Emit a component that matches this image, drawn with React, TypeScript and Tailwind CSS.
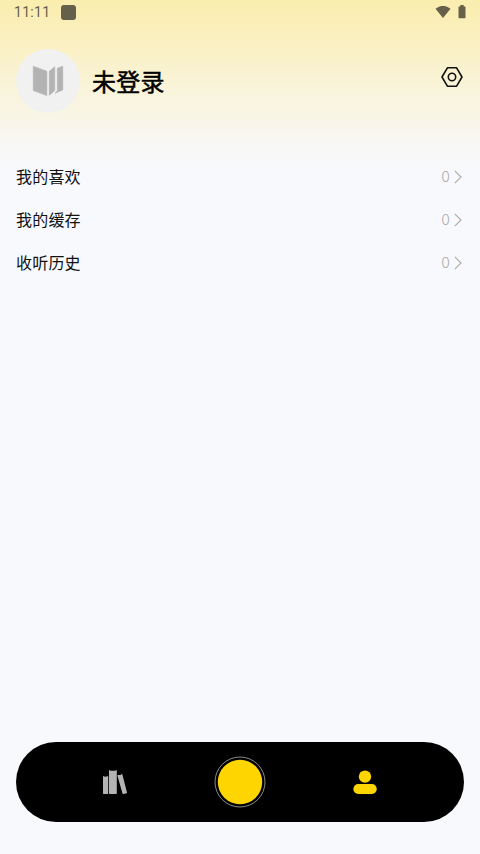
const MENU_ITEMS = [
  { label: "我的喜欢", count: 0 },
  { label: "我的缓存", count: 0 },
  { label: "收听历史", count: 0 },
]

function StatusBar() {
  return (
    <div className="flex h-6 items-center justify-between pl-3.5 pr-3.5 text-[#665f49]">
      <div className="flex items-center">
        <span className="w-[46.5px] font-[Roboto,sans-serif] text-sm leading-6 tracking-[0.3px] text-[#665f49]">11:11</span>
        <span className="h-[15px] w-[15px] rounded-[3px] bg-[#665f49]" />
      </div>
      <div className="flex items-center gap-[7px]">
        <svg className="h-3 w-4" viewBox="0 0 16 12" fill="currentColor">
          <path d="M0.5 2.7Q8-3 15.5 2.7L8 12Z" />
        </svg>
        <svg className="h-[14px] w-2" viewBox="0 0 8 14" fill="currentColor">
          <path d="M2.3 0h3.4v1.4H7q0.5 0 0.5 0.6V12.6q0 0.6-0.6 0.6H1.1q-0.6 0-0.6-0.6V2q0-0.6 0.5-0.6h1.3z" />
        </svg>
      </div>
    </div>
  )
}

function ProfileHeader() {
  return (
    <header className="mt-[25px] flex h-16 items-center px-4">
      <div className="h-16 w-16 rounded-full bg-[#f1f1f1]">
        <svg className="h-16 w-16" viewBox="0 0 64 64" fill="#b3b3b3" stroke="#b3b3b3" strokeWidth="0.7" strokeLinejoin="round">
          <path d="M17.3 17.3L30.8 22.3V46.5L17.3 41.5Z" />
          <path d="M33.4 22.3L38.7 17.8V41.4L33.4 46.2Z" />
          <path d="M41.4 19.3L46.7 17.3V41L39 44.2L41.4 41.9Z" />
        </svg>
      </div>
      <h1 className="ml-3 text-2xl font-normal leading-8 tracking-[0.2px] text-black [-webkit-text-stroke:0.5px_black]">未登录</h1>
      <svg className="mb-2 ml-auto h-6 w-6" viewBox="0 0 24 24" fill="none" stroke="#111" strokeWidth="1.6" strokeLinejoin="round">
        <path d="M7.4 2.8h9.2L22 12l-5.4 9.2H7.4L2 12z" />
        <circle cx="12" cy="12" r="3.7" />
      </svg>
    </header>
  )
}

function MenuList() {
  return (
    <ul className="mt-[42px] px-4">
      {MENU_ITEMS.map((item) => (
        <li key={item.label} className="flex h-[43px] items-center">
          <span className="pb-0.5 text-base leading-6 tracking-[0.2px] text-[#111]">{item.label}</span>
          <span className="ml-auto font-[Inter,sans-serif] text-sm font-light leading-5 text-[#aaa]">{item.count}</span>
          <svg className="ml-1 h-[14px] w-2 shrink-0 mr-0.5" viewBox="0 0 8 14" fill="none" stroke="#aaa" strokeWidth="1.1">
            <path d="M0.8 0.8L7 7L0.8 13.2" />
          </svg>
        </li>
      ))}
    </ul>
  )
}

function BottomNav() {
  return (
    <nav className="mx-4 mb-8 mt-auto grid h-20 grid-cols-[198px_52px_198px] items-center rounded-full bg-black">
      <button className="flex justify-center" aria-label="书架">
        <svg className="h-6 w-6" viewBox="0 0 24 24" fill="#b3b3b3">
          <path d="M0.2 6Q2.5 7.3 4.9 6L5.2 6.5V23.3Q5.2 24 4.5 24H0.7Q0 24 0 23.3V6.5Z" />
          <path d="M6.2 0L7.6 0.8H12L13.4 0L13.8 0.6V23.2Q13.8 24 13 24H6.8Q6 24 6 23.2V0.6Z" />
          <path d="M14.8 5Q17.3 5.4 18.8 3.9L19.3 4.2L24 22.5Q24.1 23.1 23.6 23.3L20.4 24Q19.7 24.1 19.5 23.4L14.4 5.6Z" />
        </svg>
      </button>
      <button className="flex justify-center" aria-label="播放">
        <svg className="h-[52px] w-[52px] shrink-0" viewBox="0 0 52 52">
          <circle cx="26" cy="26" r="25" fill="none" stroke="#999" strokeWidth="0.9" />
          <circle cx="26" cy="26" r="22.2" fill="#ffd500" />
        </svg>
      </button>
      <button className="flex justify-center pr-px" aria-label="我的">
        <svg className="h-6 w-6" viewBox="0 0 24 24" fill="#ffd500">
          <circle cx="12" cy="6.6" r="6.2" />
          <rect x="0.4" y="14" width="23.3" height="10" rx="4.8" />
        </svg>
      </button>
    </nav>
  )
}

export default function App() {
  return (
    <div className="flex h-[854px] w-[480px] flex-col overflow-hidden bg-[#f8f9fd] bg-[linear-gradient(180deg,#fbedae_0px,#f8f8f7_150px,#f8f9fd_175px)] font-['Noto_Sans_CJK_SC',sans-serif]">
      <StatusBar />
      <ProfileHeader />
      <MenuList />
      <BottomNav />
    </div>
  )
}
